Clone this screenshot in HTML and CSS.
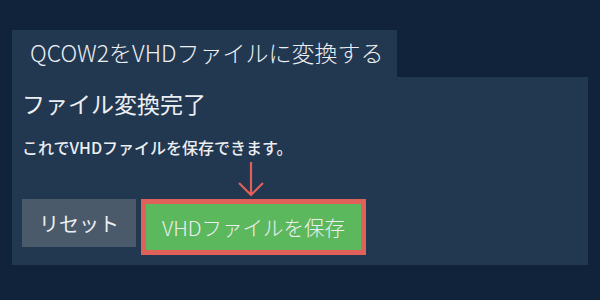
FILE: index.html
```html
<!DOCTYPE html>
<html lang="ja">
<head>
  <meta charset="UTF-8" />
  <meta name="viewport" content="width=device-width, initial-scale=1.0"/>
  <title>QCOW2をVHDファイルに変換する</title>
  <link rel="stylesheet" href="styles.css">
</head>
<body>

  <div class="tab">QCOW2をVHDファイルに変換する</div>

  <div class="panel">
    <h2>ファイル変換完了</h2>
    <p>これでVHDファイルを保存できます。</p>

    <div class="actions">
      <button class="reset">リセット</button>
      <div class="save-wrap">
        <svg class="arrow" width="30" height="36" viewBox="0 0 30 36">
          <path d="M15 1 V34 M3 22 L15 34 L27 22" fill="none" stroke="#e0605a" stroke-width="2.2"/>
        </svg>
        <button class="save">VHDファイルを保存</button>
      </div>
    </div>
  </div>

</body>
</html>
```

FILE: styles.css
```css
:root {
  --page-bg: #11233a;
  --panel-bg: #223750;
  --text-color: #eceff2;
  --reset-bg: #4b5a6b;
  --save-bg: #5cb85c;
  --save-border: #e0605a;
}

body {
  margin: 0;
  padding: 30px 12px;
  background-color: var(--page-bg);
  color: var(--text-color);
  font-family: "Noto Sans CJK JP", "Noto Sans", sans-serif;
}

.tab {
  display: inline-block;
  width: 385px;
  height: 47px;
  box-sizing: border-box;
  padding: 5px 0 0 18px;
  background-color: var(--panel-bg);
  font-size: 23px;
  font-weight: 300;
}

.panel {
  width: 576px;
  height: 188px;
  box-sizing: border-box;
  padding: 10px 10px 0;
  background-color: var(--panel-bg);
}

.panel h2 {
  margin: 0;
  font-size: 23px;
  font-weight: 400;
  line-height: 32px;
}

.panel p {
  margin: 17px 0 0;
  font-size: 16px;
  font-weight: 500;
  line-height: 22px;
}

.actions {
  display: flex;
  align-items: flex-start;
  gap: 5px;
  margin-top: 41px;
}

button {
  border: none;
  color: var(--text-color);
  font-family: inherit;
  cursor: pointer;
}

.reset {
  height: 48px;
  padding: 0 17px;
  background-color: var(--reset-bg);
  font-size: 20px;
  font-weight: 400;
}

.save-wrap {
  position: relative;
}

.arrow {
  position: absolute;
  left: 95px;
  top: -38px;
}

.save {
  height: 56px;
  padding: 0 16px;
  background-color: var(--save-bg);
  border: 5px solid var(--save-border);
  font-size: 20.5px;
  font-weight: 300;
}
```
